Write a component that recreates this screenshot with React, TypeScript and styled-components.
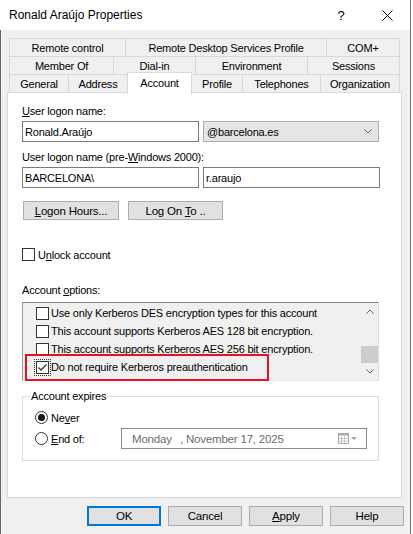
import React from 'react';
import styled, { createGlobalStyle, css } from 'styled-components';

const GlobalStyle = createGlobalStyle`
  html, body { margin: 0; padding: 0; background: #fff; }
  body { font-family: "Liberation Sans", Arial, sans-serif; }
  * { box-sizing: border-box; }
`;

const Screen = styled.div`
  width: 413px;
  height: 534px;
  display: flex;
  background: #fff;
  overflow: hidden;
`;

const Window = styled.div`
  width: 411px;
  height: 534px;
  display: flex;
  flex-direction: column;
  border-right: 1px solid #747474;
  background: #f0f0f0;
`;

const TitleBar = styled.div`
  height: 30px;
  flex: none;
  display: flex;
  align-items: center;
  background: #fff;
  padding-left: 9px;
`;

const Title = styled.div`
  flex: 1;
  font-size: 12px;
  color: #000;
`;

const CaptionButton = styled.div`
  width: 46px;
  height: 30px;
  display: flex;
  align-items: center;
  justify-content: center;
  font-size: 13px;
  color: #000;
`;

const Body = styled.div`
  flex: 1;
  border-left: 1px solid #666;
  padding: 8px 0 0 6px;
  font-size: 11px;
  letter-spacing: -0.2px;
  color: #000;
`;

const TabStrip = styled.div`
  margin-left: 2px;
  width: 391px;
  display: flex;
  flex-direction: column;
`;

const TabRow = styled.div`
  display: flex;
  height: 19px;
  & + & { margin-top: -1px; }
`;

const Tab = styled.div<{ $w: number; $active?: boolean }>`
  width: ${p => p.$w}px;
  flex: none;
  height: 19px;
  border: 1px solid #d9d9d9;
  background: #f0f0f0;
  display: flex;
  align-items: center;
  justify-content: center;
  white-space: nowrap;
  & + & { margin-left: -1px; }
  ${p => p.$active && css`
    position: relative;
    z-index: 2;
    height: 22px;
    margin-top: -2px;
    background: #fff;
    border-bottom: none;
    padding-bottom: 2px;
  `}
`;

const Panel = styled.div`
  width: 395px;
  height: 406px;
  margin-top: -1px;
  background: #fff;
  border: 1px solid #d9d9d9;
  padding: 12px 0 0 14px;
  display: flex;
  flex-direction: column;
`;

const Label = styled.div<{ $mt?: number }>`
  line-height: 13px;
  height: 13px;
  margin-top: ${p => p.$mt ?? 0}px;
  margin-bottom: 3px;
  white-space: nowrap;
`;

const U = styled.span`
  text-decoration: underline;
  text-underline-offset: 1px;
`;

const FieldRow = styled.div<{ $mb?: number }>`
  display: flex;
  gap: 4px;
  height: 21px;
  margin-bottom: ${p => p.$mb ?? 0}px;
`;

const TextBox = styled.div<{ $w: number }>`
  width: ${p => p.$w}px;
  height: 100%;
  border: 1px solid #7a7a7a;
  background: #fff;
  display: flex;
  align-items: center;
  padding-left: 2px;
  white-space: nowrap;
`;

const Select = styled.div`
  width: 176px;
  height: 100%;
  border: 1px solid #adadad;
  background: #e5e5e5;
  display: flex;
  align-items: center;
  padding: 0 6px 0 3px;
  justify-content: space-between;
`;

const ButtonRow = styled.div<{ $mt?: number; $ml?: number; $gap: number }>`
  display: flex;
  gap: ${p => p.$gap}px;
  margin-top: ${p => p.$mt ?? 0}px;
  margin-left: ${p => p.$ml ?? 0}px;
`;

const Button = styled.div<{ $w: number; $h: number; $default?: boolean }>`
  width: ${p => p.$w}px;
  height: ${p => p.$h}px;
  background: #e1e1e1;
  border: ${p => (p.$default ? '2px solid #0078d7' : '1px solid #adadad')};
  display: flex;
  align-items: center;
  justify-content: center;
  white-space: pre;
  font-size: 11.5px;
`;

const CheckRow = styled.div<{ $mt?: number; $gap: number }>`
  display: flex;
  align-items: center;
  gap: ${p => p.$gap}px;
  height: 13px;
  margin-top: ${p => p.$mt ?? 0}px;
  white-space: nowrap;
`;

const Box = styled.div`
  width: 13px;
  height: 13px;
  flex: none;
  border: 1px solid #333;
  background: #fff;
  display: flex;
  align-items: center;
  justify-content: center;
`;

const ListWrap = styled.div`
  position: relative;
  width: 357px;
  height: 79px;
  margin-top: 2px;
`;

const List = styled.div`
  width: 100%;
  height: 100%;
  display: flex;
  border-top: 1px solid #828282;
  border-left: 1px solid #9a9a9a;
  border-right: 1px solid #dcdcdc;
  border-bottom: 1px solid #e3e3e3;
  background: #f0f0f0;
`;

const Items = styled.div`
  flex: 1;
  padding: 1px 0 0 11px;
  overflow: hidden;
`;

const Item = styled.div`
  height: 18px;
  display: flex;
  align-items: center;
  white-space: nowrap;
`;

const FocusWrap = styled.div<{ $focus?: boolean }>`
  padding: 1px;
  border: 1px dotted ${p => (p.$focus ? '#333' : 'transparent')};
  display: flex;
  flex: none;
`;

const ScrollBar = styled.div`
  width: 17px;
  display: flex;
  flex-direction: column;
  background: #f0f0f0;
`;

const ScrollArrow = styled.div`
  height: 17px;
  flex: none;
  display: flex;
  align-items: center;
  justify-content: center;
`;

const Thumb = styled.div`
  height: 17px;
  margin-top: 26px;
  background: #cdcdcd;
  flex: none;
`;

const Spacer = styled.div`
  flex: 1;
`;

const Highlight = styled.div`
  position: absolute;
  left: 3px;
  top: 52px;
  width: 244px;
  height: 27px;
  border: 2px solid #e81123;
  pointer-events: none;
`;

const GroupBox = styled.fieldset`
  width: 357px;
  margin: 9px 0 0 0;
  border: 1px solid #dcdcdc;
  padding: 8px 0 11px 12px;
  min-width: 0;
  display: flex;
  flex-direction: column;
`;

const Legend = styled.legend`
  margin-left: -5px;
  padding: 0 1px;
  line-height: 13px;
  font-size: 11px;
`;

const RadioRow = styled.div<{ $h: number; $mt?: number }>`
  display: flex;
  align-items: center;
  height: ${p => p.$h}px;
  margin-top: ${p => p.$mt ?? 0}px;
  white-space: nowrap;
`;

const RadioLabel = styled.div<{ $w?: number }>`
  display: flex;
  align-items: center;
  gap: 3px;
  width: ${p => (p.$w ? `${p.$w}px` : 'auto')};
  flex: none;
`;

const Radio = styled.div<{ $on?: boolean }>`
  width: 13px;
  height: 13px;
  border-radius: 50%;
  border: 1px solid #333;
  background: #fff;
  display: flex;
  align-items: center;
  justify-content: center;
  &::after {
    content: '';
    width: 7px;
    height: 7px;
    border-radius: 50%;
    background: ${p => (p.$on ? '#1a1a1a' : 'transparent')};
  }
`;

const DatePicker = styled.div`
  width: 246px;
  height: 21px;
  border: 1px solid #8c8c8c;
  background: #fff;
  display: flex;
  align-items: center;
  padding: 0 8px 0 10px;
  color: #6d6d6d;
  font-size: 11.5px;
`;

const DayName = styled.span`
  width: 48px;
  flex: none;
`;

const DateText = styled.span`
  flex: 1;
`;

const Chevron = ({ up }: { up?: boolean }) => (
  <svg width="8" height="5" viewBox="0 0 8 5">
    <polyline
      points={up ? '0.5,4.5 4,1 7.5,4.5' : '0.5,0.5 4,4 7.5,0.5'}
      fill="none"
      stroke="#606060"
      strokeWidth="1"
    />
  </svg>
);

const CheckMark = () => (
  <svg width="11" height="11" viewBox="0 0 11 11">
    <polyline points="1.5,5.5 4,8 9.5,2.5" fill="none" stroke="#333" strokeWidth="1.3" />
  </svg>
);

const tabRows: { label: string; w: number; active?: boolean }[][] = [
  [
    { label: 'Remote control', w: 117 },
    { label: 'Remote Desktop Services Profile', w: 202 },
    { label: 'COM+', w: 74 },
  ],
  [
    { label: 'Member Of', w: 105 },
    { label: 'Dial-in', w: 83 },
    { label: 'Environment', w: 113 },
    { label: 'Sessions', w: 93 },
  ],
  [
    { label: 'General', w: 60 },
    { label: 'Address', w: 60 },
    { label: 'Account', w: 65, active: true },
    { label: 'Profile', w: 52 },
    { label: 'Telephones', w: 79 },
    { label: 'Organization', w: 80 },
  ],
];

const options = [
  { text: 'Use only Kerberos DES encryption types for this account' },
  { text: 'This account supports Kerberos AES 128 bit encryption.' },
  { text: 'This account supports Kerberos AES 256 bit encryption.' },
  { text: 'Do not require Kerberos preauthentication', checked: true, focus: true },
];

export default function App() {
  return (
    <>
      <GlobalStyle />
      <Screen>
        <Window>
          <TitleBar>
            <Title>Ronald Araújo Properties</Title>
            <CaptionButton>?</CaptionButton>
            <CaptionButton>
              <svg width="11" height="11" viewBox="0 0 11 11">
                <line x1="0.5" y1="0.5" x2="10.5" y2="10.5" stroke="#000" strokeWidth="1" />
                <line x1="10.5" y1="0.5" x2="0.5" y2="10.5" stroke="#000" strokeWidth="1" />
              </svg>
            </CaptionButton>
          </TitleBar>
          <Body>
            <TabStrip>
              {tabRows.map((row, i) => (
                <TabRow key={i}>
                  {row.map(t => (
                    <Tab key={t.label} $w={t.w} $active={t.active}>
                      {t.label}
                    </Tab>
                  ))}
                </TabRow>
              ))}
            </TabStrip>
            <Panel>
              <Label>
                <U>U</U>ser logon name:
              </Label>
              <FieldRow $mb={9}>
                <TextBox $w={177}>Ronald.Araújo</TextBox>
                <Select>
                  <span>@barcelona.es</span>
                  <Chevron />
                </Select>
              </FieldRow>
              <Label>
                User logon name (pre-<U>W</U>indows 2000):
              </Label>
              <FieldRow>
                <TextBox $w={177}>BARCELONA\</TextBox>
                <TextBox $w={177}>r.araujo</TextBox>
              </FieldRow>
              <ButtonRow $mt={13} $ml={1} $gap={9}>
                <Button $w={96} $h={19}>
                  <span>
                    <U>L</U>ogon Hours...
                  </span>
                </Button>
                <Button $w={95} $h={19}>
                  <span>
                    Log On <U>T</U>o ..
                  </span>
                </Button>
              </ButtonRow>
              <CheckRow $mt={28} $gap={3}>
                <Box />
                <span>
                  U<U>n</U>lock account
                </span>
              </CheckRow>
              <Label $mt={23}>
                Account <U>o</U>ptions:
              </Label>
              <ListWrap>
                <List>
                  <Items>
                    {options.map(o => (
                      <Item key={o.text}>
                        <FocusWrap $focus={o.focus}>
                          <Box>{o.checked && <CheckMark />}</Box>
                        </FocusWrap>
                        <span>{o.text}</span>
                      </Item>
                    ))}
                  </Items>
                  <ScrollBar>
                    <ScrollArrow>
                      <Chevron up />
                    </ScrollArrow>
                    <Thumb />
                    <Spacer />
                    <ScrollArrow>
                      <Chevron />
                    </ScrollArrow>
                  </ScrollBar>
                </List>
                <Highlight />
              </ListWrap>
              <GroupBox>
                <Legend>Account expires</Legend>
                <RadioRow $h={13}>
                  <RadioLabel>
                    <Radio $on />
                    <span>
                      Ne<U>v</U>er
                    </span>
                  </RadioLabel>
                </RadioRow>
                <RadioRow $h={21} $mt={4}>
                  <RadioLabel $w={86}>
                    <Radio />
                    <span>
                      <U>E</U>nd of:
                    </span>
                  </RadioLabel>
                  <DatePicker>
                    <DayName>Monday</DayName>
                    <DateText>, November 17, 2025</DateText>
                    <svg width="20" height="11" viewBox="0 0 20 11">
                      <rect x="0.5" y="0.5" width="10" height="10" fill="#fff" stroke="#a8a8a8" />
                      <rect x="0.5" y="0.5" width="10" height="2" fill="#a8a8a8" />
                      <line x1="3.5" y1="3" x2="3.5" y2="10" stroke="#c8c8c8" />
                      <line x1="6.5" y1="3" x2="6.5" y2="10" stroke="#c8c8c8" />
                      <line x1="1" y1="5.5" x2="10" y2="5.5" stroke="#c8c8c8" />
                      <line x1="1" y1="8" x2="10" y2="8" stroke="#c8c8c8" />
                      <polygon points="13,4 19,4 16,7" fill="#a8a8a8" />
                    </svg>
                  </DatePicker>
                </RadioRow>
              </GroupBox>
            </Panel>
            <ButtonRow $mt={8} $ml={80} $gap={7}>
              <Button $w={74} $h={20} $default>
                OK
              </Button>
              <Button $w={74} $h={20}>
                Cancel
              </Button>
              <Button $w={74} $h={20}>
                <span>
                  <U>A</U>pply
                </span>
              </Button>
              <Button $w={74} $h={20}>
                Help
              </Button>
            </ButtonRow>
          </Body>
        </Window>
      </Screen>
    </>
  );
}
